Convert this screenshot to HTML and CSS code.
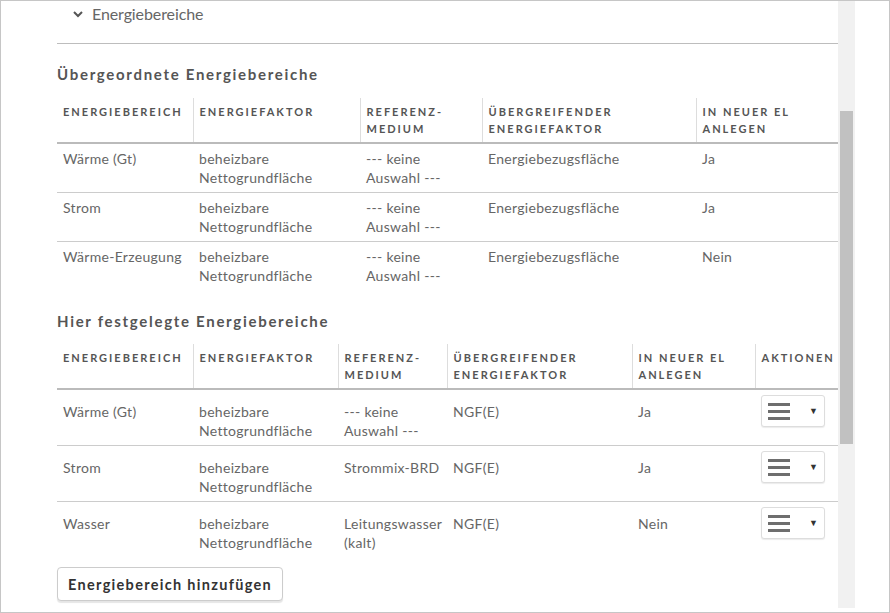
FILE: index.html
```html
<!DOCTYPE html>
<html lang="de">
<head>
<meta charset="utf-8">
<title>Energiebereiche</title>
<link rel="stylesheet" href="styles.css">
</head>
<body>
<div class="frame">
  <div class="content">
    <div class="section-head">
      <svg class="chev" width="10" height="7" viewBox="0 0 10 7"><polyline points="1,1 5,5 9,1" fill="none" stroke="#555" stroke-width="2"/></svg>
      <span class="section-title">Energiebereiche</span>
    </div>

    <h3 class="group-title t1">Übergeordnete Energiebereiche</h3>
    <table class="tbl">
      <colgroup>
        <col style="width:136px"><col style="width:167px"><col style="width:122px"><col style="width:214px"><col style="width:142px">
      </colgroup>
      <thead>
        <tr><th>Energiebereich</th><th>Energiefaktor</th><th>Referenz-<br>medium</th><th>Übergreifender Energiefaktor</th><th>In neuer EL anlegen</th></tr>
      </thead>
      <tbody>
        <tr><td>Wärme (Gt)</td><td>beheizbare Nettogrundfläche</td><td>--- keine Auswahl ---</td><td>Energiebezugsfläche</td><td>Ja</td></tr>
        <tr><td>Strom</td><td>beheizbare Nettogrundfläche</td><td>--- keine Auswahl ---</td><td>Energiebezugsfläche</td><td>Ja</td></tr>
        <tr><td>Wärme-Erzeugung</td><td>beheizbare Nettogrundfläche</td><td>--- keine Auswahl ---</td><td>Energiebezugsfläche</td><td>Nein</td></tr>
      </tbody>
    </table>

    <h3 class="group-title t2">Hier festgelegte Energiebereiche</h3>
    <table class="tbl tbl2">
      <colgroup>
        <col style="width:136px"><col style="width:145px"><col style="width:109px"><col style="width:185px"><col style="width:123px"><col style="width:83px">
      </colgroup>
      <thead>
        <tr><th>Energiebereich</th><th>Energiefaktor</th><th>Referenz-<br>medium</th><th>Übergreifender Energiefaktor</th><th>In neuer EL anlegen</th><th>Aktionen</th></tr>
      </thead>
      <tbody>
        <tr><td>Wärme (Gt)</td><td>beheizbare Nettogrundfläche</td><td>--- keine Auswahl ---</td><td>NGF(E)</td><td>Ja</td>
          <td class="act"><button class="menu-btn" type="button"><span class="burger"><i></i><i></i><i></i></span><span class="caret">▼</span></button></td></tr>
        <tr><td>Strom</td><td>beheizbare Nettogrundfläche</td><td>Strommix-BRD</td><td>NGF(E)</td><td>Ja</td>
          <td class="act"><button class="menu-btn" type="button"><span class="burger"><i></i><i></i><i></i></span><span class="caret">▼</span></button></td></tr>
        <tr><td>Wasser</td><td>beheizbare Nettogrundfläche</td><td>Leitungswasser (kalt)</td><td>NGF(E)</td><td>Nein</td>
          <td class="act"><button class="menu-btn" type="button"><span class="burger"><i></i><i></i><i></i></span><span class="caret">▼</span></button></td></tr>
      </tbody>
    </table>

    <button class="add-btn" type="button">Energiebereich hinzufügen</button>
  </div>
  <div class="scrollbar"><div class="thumb"></div></div>
</div>
</body>
</html>
```
FILE: styles.css
```css
* { box-sizing: border-box; }
html, body { margin: 0; padding: 0; background: #fff; }
body { font-family: Lato, "Open Sans", "Liberation Sans", sans-serif; color: #666; }

.frame {
  width: 890px;
  height: 613px;
  border: 1px solid #c6c6c6;
  display: flex;
  align-items: flex-start;
  overflow: hidden;
}

.content {
  width: 837px;
  padding-left: 56px;
  flex: none;
}

.section-head {
  display: flex;
  align-items: center;
  padding: 3px 0 19px 16px;
  border-bottom: 1px solid #bdbdbd;
  height: 43px;
}
.chev { display: block; margin-right: 9px; }
.section-title { font-size: 16px; line-height: 20px; color: #666; letter-spacing: -0.1px; }

.group-title {
  margin: 0;
  font-size: 15px;
  line-height: 20px;
  font-weight: 700;
  letter-spacing: 1.7px;
  color: #555;
}
.t1 { margin-top: 20px; margin-bottom: 14px; }
.t2 { margin-top: 21px; margin-bottom: 13px; }

.tbl {
  width: 781px;
  table-layout: fixed;
  border-collapse: collapse;
  border-spacing: 0;
}
.tbl th {
  text-align: left;
  vertical-align: top;
  font-size: 11px;
  line-height: 17px;
  font-weight: 700;
  letter-spacing: 2px;
  text-transform: uppercase;
  color: #555;
  padding: 5px 6px 5px 6px;
  border-bottom: 2px solid #bbb;
  border-left: 1px solid #ddd;
}
.tbl th:first-child { border-left: 0; }
.tbl td {
  vertical-align: top;
  font-size: 14px;
  line-height: 19px;
  letter-spacing: 0.3px;
  color: #666;
  padding: 5px 6px 5px 6px;
  border-top: 1px solid #ccc;
}
.tbl2 td { padding-top: 12px; }
.tbl2 td.act { padding-top: 5px; padding-bottom: 0; }

.menu-btn {
  width: 64px;
  height: 32px;
  display: flex;
  align-items: center;
  padding: 0 0 0 6px;
  background: #fff;
  border: 1px solid #ddd;
  border-radius: 3px;
  box-shadow: 0 1px 1px rgba(0,0,0,0.08);
  cursor: pointer;
}
.burger { display: flex; flex-direction: column; gap: 4px; width: 22px; }
.burger i { display: block; height: 3px; background: #6e6e6e; }
.caret { margin-left: auto; margin-right: 6px; font-size: 9px; line-height: 9px; color: #333; }

.add-btn {
  margin-top: 10px;
  width: 226px;
  height: 34px;
  padding: 0 0 0 10px;
  text-align: left;
  font-family: Lato, "Open Sans", "Liberation Sans", sans-serif;
  font-size: 14.5px;
  font-weight: 700;
  letter-spacing: 1.3px;
  color: #333;
  background: #fff;
  border: 1px solid #ccc;
  border-radius: 4px;
  box-shadow: 0 2px 1px rgba(0,0,0,0.1);
}

.scrollbar {
  width: 17px;
  height: 607px;
  background: #f1f1f1;
  flex: none;
  padding: 110px 2px 0 2px;
}
.thumb { height: 333px; background: #c1c1c1; }
```
